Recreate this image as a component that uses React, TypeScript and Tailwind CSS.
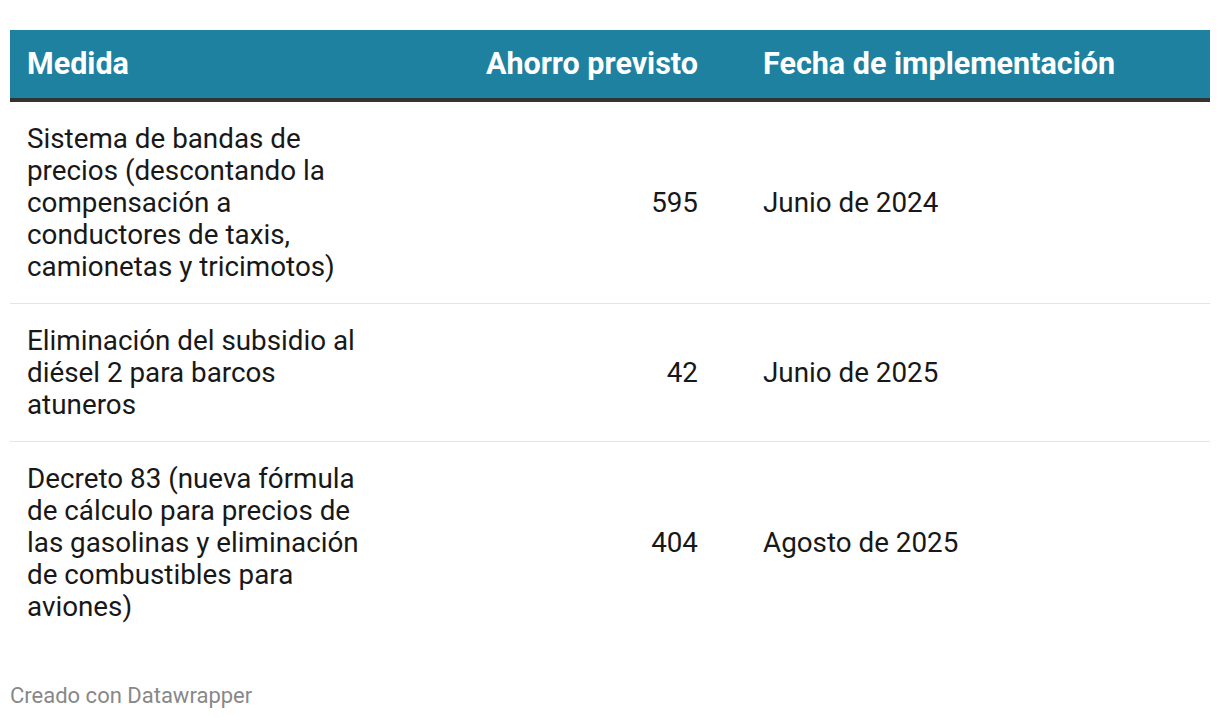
export default function App() {
  const rows = [
    {
      m: "Sistema de bandas de precios (descontando la compensación a conductores de taxis, camionetas y tricimotos)",
      a: "595",
      f: "Junio de 2024",
    },
    { m: "Eliminación del subsidio al diésel 2 para barcos atuneros", a: "42", f: "Junio de 2025" },
    {
      m: "Decreto 83 (nueva fórmula de cálculo para precios de las gasolinas y eliminación de combustibles para aviones)",
      a: "404",
      f: "Agosto de 2025",
    },
  ];
  return (
    <div className="w-[1220px] h-[718px] bg-white px-[10px] pt-[30px]" style={{ fontFamily: "Roboto, sans-serif" }}>
      <div className="grid grid-cols-[370px_344px_1fr] bg-[#1e81a0] h-[68px] items-center border-b-4 border-[#333333] box-content text-white font-bold text-[30.5px]">
        <div className="pl-[17px]">Medida</div>
        <div className="text-right pr-[26px]">Ahorro previsto</div>
        <div className="pl-[39px]">Fecha de implementación</div>
      </div>
      {rows.map((r, i) => (
        <div
          key={i}
          className={`grid grid-cols-[370px_344px_1fr] items-center pt-[21px] pb-[20px] text-[27.8px] leading-[32px] text-[#181818] ${i < rows.length - 1 ? "border-b border-[#e5e5e5]" : ""}`}
        >
          <div className="pl-[17px] pr-[8px]">{r.m}</div>
          <div className="text-right pr-[26px]">{r.a}</div>
          <div className="pl-[39px]">{r.f}</div>
        </div>
      ))}
      <div className="mt-[36px] text-[22px] text-[#888888]">Creado con Datawrapper</div>
    </div>
  );
}
